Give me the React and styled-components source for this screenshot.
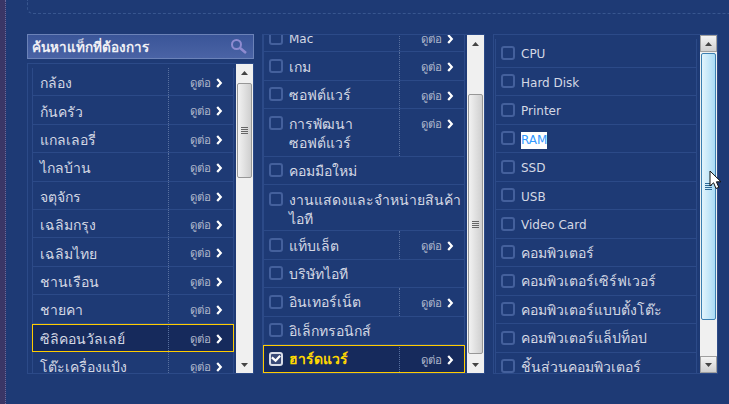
import React from "react";
import styled, { createGlobalStyle } from "styled-components";

const tags = [
  { name: "กล้อง" },
  { name: "ก้นครัว" },
  { name: "แกลเลอรี่" },
  { name: "ไกลบ้าน" },
  { name: "จตุจักร" },
  { name: "เฉลิมกรุง" },
  { name: "เฉลิมไทย" },
  { name: "ชานเรือน" },
  { name: "ชายคา" },
  { name: "ซิลิคอนวัลเลย์", active: true },
  { name: "โต๊ะเครื่องแป้ง" },
];

const categories = [
  { name: "Mac", more: true, h: 28.4 },
  { name: "เกม", more: true, h: 28.4 },
  { name: "ซอฟต์แวร์", more: true, h: 28.4 },
  { name: "การพัฒนา\nซอฟต์แวร์", more: true, h: 47.4, tall: true },
  { name: "คอมมือใหม่", h: 28.4 },
  { name: "งานแสดงและจำหน่ายสินค้า\nไอที", h: 46.4, tall: true },
  { name: "แท็บเล็ต", more: true, h: 28.4 },
  { name: "บริษัทไอที", h: 28.4 },
  { name: "อินเทอร์เน็ต", more: true, h: 28.4 },
  { name: "อิเล็กทรอนิกส์", h: 28.4 },
  { name: "ฮาร์ดแวร์", more: true, h: 28.4, active: true, checked: true },
];

const items = [
  "CPU",
  "Hard Disk",
  "Printer",
  "RAM",
  "SSD",
  "USB",
  "Video Card",
  "คอมพิวเตอร์",
  "คอมพิวเตอร์เซิร์ฟเวอร์",
  "คอมพิวเตอร์แบบตั้งโต๊ะ",
  "คอมพิวเตอร์แล็ปท็อป",
  "ชิ้นส่วนคอมพิวเตอร์",
];

const isThai = (text) => /[\u0E00-\u0E7F]/.test(text);

const Arrow = ({ down }) => (
  <svg width="7" height="4" viewBox="0 0 7 4">
    <path d={down ? "M0 0h7L3.5 4z" : "M3.5 0L7 4H0z"} fill="#444" />
  </svg>
);

const Chevron = () => (
  <svg width="7" height="10" viewBox="0 0 7 10">
    <path d="M1.2 1l3.6 4-3.6 4" fill="none" stroke="#fff" strokeWidth="2.2" />
  </svg>
);

const MoreCell = () => (
  <More>
    <MoreLink>
      ดูต่อ <Chevron />
    </MoreLink>
  </More>
);

const Scrollbar = ({ top, height, hover }) => (
  <Bar $hover={hover}>
    <BarButton $hover={hover}>
      <Arrow />
    </BarButton>
    <Track>
      <Thumb $top={top} $height={height} $hover={hover}>
        <Grip $hover={hover} />
        <Grip $hover={hover} />
        <Grip $hover={hover} />
        <Grip $hover={hover} />
      </Thumb>
    </Track>
    <BarButton $hover={hover}>
      <Arrow down />
    </BarButton>
  </Bar>
);

const App = () => {
  return (
    <>
      <GlobalStyle />
      <Page>
        <SideStrip />
        <Content>
          <DashedBox />
          <Columns>
            <Column $width="227px">
              <SearchBox>
                <SearchText>ค้นหาแท็กที่ต้องการ</SearchText>
                <svg width="17" height="17" viewBox="0 0 17 17">
                  <circle cx="6.5" cy="6.5" r="4.5" fill="none" stroke="#8e8bd0" strokeWidth="2" />
                  <path d="M10 10l6 5" stroke="#8e8bd0" strokeWidth="2.6" />
                </svg>
              </SearchBox>
              <ListBox $height="311px">
                <Rows $pad="4px 0 0 4px">
                  {tags.map((t) => (
                    <Row key={t.name} $h={28.4} $active={t.active}>
                      <Label $indent="2px" $drop="4px" $thai>
                        {t.name}
                      </Label>
                      <MoreCell />
                    </Row>
                  ))}
                </Rows>
                <Scrollbar top={2} height={95} />
              </ListBox>
            </Column>

            <Column $width="223px">
              <ListBox $height="340px">
                <Rows $pad="0" $shift="-11px">
                  {categories.map((c) => (
                    <Row key={c.name} $h={c.h} $active={c.active}>
                      <Box $checked={c.checked} $tall={c.tall}>
                        {c.checked && (
                          <svg width="12" height="10" viewBox="0 0 12 10">
                            <path d="M1 3l4.5 4L11 1" fill="none" stroke="#fff" strokeWidth="2.6" />
                          </svg>
                        )}
                      </Box>
                      <Label $checked={c.checked} $tall={c.tall} $thai={isThai(c.name)}>
                        {c.name}
                      </Label>
                      {c.more && <MoreCell />}
                    </Row>
                  ))}
                </Rows>
                <Scrollbar top={42} height={260} />
              </ListBox>
            </Column>

            <Column $width="225px">
              <ListBox $height="340px">
                <Rows $pad="4px 0 0 1px">
                  {items.map((name) => (
                    <Row key={name} $h={28.5}>
                      <Box />
                      <Label $thai={isThai(name)}>
                        {name === "RAM" ? <Selected>RAM</Selected> : name}
                      </Label>
                    </Row>
                  ))}
                </Rows>
                <Scrollbar top={1} height={267} hover />
              </ListBox>
            </Column>
          </Columns>
        </Content>
        <Cursor width="13" height="20" viewBox="0 0 13 20">
          <path d="M1 1v15l3.6-3.2 2.4 5.7 2.8-1.2-2.4-5.5H12z" fill="#fff" stroke="#111" strokeWidth="1" />
        </Cursor>
      </Page>
    </>
  );
};

const GlobalStyle = createGlobalStyle`
  body {
    margin: 0;
    padding: 0;
    background: #1e3a75;
  }
`;

const Page = styled.div`
  position: relative;
  display: flex;
  width: 729px;
  height: 404px;
  overflow: hidden;
  background: #1e3a75;
  font-family: "DejaVu Sans", "Noto Sans", sans-serif;
`;

const SideStrip = styled.div`
  width: 5px;
  flex-shrink: 0;
  background: #3a3666;
  border-right: 1px dotted #6a6a9a;
`;

const Content = styled.div`
  flex: 1;
  padding-left: 21px;
`;

const DashedBox = styled.div`
  height: 13px;
  border: 1px dashed #38568f;
  border-top: 0;
  border-right: 0;
  border-bottom-left-radius: 6px;
`;

const Columns = styled.div`
  display: flex;
  gap: 8px;
  margin-top: 20px;
`;

const Column = styled.div`
  display: flex;
  flex-direction: column;
  width: ${(p) => p.$width};
  gap: 4px;
`;

const SearchBox = styled.div`
  display: flex;
  align-items: center;
  justify-content: space-between;
  height: 25px;
  box-sizing: border-box;
  padding: 0 6px 0 4px;
  background: linear-gradient(#3a5598, #4a63a5);
  border: 1px solid #6b82b8;
`;

const SearchText = styled.span`
  color: #f0f0f5;
  font-size: 13.5px;
  font-weight: bold;
`;

const ListBox = styled.div`
  display: flex;
  justify-content: space-between;
  height: ${(p) => p.$height};
  overflow: hidden;
  border: 1px solid #2c4a88;
  box-sizing: border-box;
`;

const Rows = styled.div`
  flex: 1;
  min-width: 0;
  overflow: hidden;
  padding: ${(p) => p.$pad};
  & > :first-child {
    margin-top: ${(p) => p.$shift || 0};
  }
`;

const Row = styled.div`
  display: flex;
  align-items: center;
  position: relative;
  box-sizing: border-box;
  width: 202px;
  height: ${(p) => p.$h}px;
  padding-left: 5px;
  border: 1px solid #2c4a88;
  border-top: 0;
  background: ${(p) => (p.$active ? "#162a5c" : "transparent")};
  outline: ${(p) => (p.$active ? "1px solid #ffcc00" : "none")};
  outline-offset: -1px;
  z-index: ${(p) => (p.$active ? 1 : 0)};
`;

const Box = styled.span`
  display: flex;
  align-items: center;
  justify-content: center;
  flex-shrink: 0;
  align-self: ${(p) => (p.$tall ? "flex-start" : "center")};
  box-sizing: border-box;
  width: 14px;
  height: 14px;
  margin-top: ${(p) => (p.$tall ? "7px" : "0")};
  margin-right: 6px;
  border: 2px solid ${(p) => (p.$checked ? "#d8dce8" : "#44609c")};
  border-radius: 3px;
  background: ${(p) => (p.$checked ? "#3a4a78" : "transparent")};
`;

const Label = styled.span`
  flex: 1;
  min-width: 0;
  align-self: ${(p) => (p.$tall ? "flex-start" : "center")};
  margin-top: ${(p) => (p.$tall ? "4px" : "0")};
  padding-top: ${(p) => p.$drop || (p.$thai ? "2px" : "4px")};
  padding-left: ${(p) => p.$indent || 0};
  color: ${(p) => (p.$checked ? "#ffd800" : "#d4d8e4")};
  font-size: ${(p) => (p.$thai ? "14px" : "12px")};
  font-weight: ${(p) => (p.$checked ? "bold" : "normal")};
  line-height: 19px;
  white-space: pre-line;
`;

const Selected = styled.span`
  display: inline-block;
  line-height: 17px;
  background: #fff;
  color: #3399ff;
`;

const More = styled.span`
  flex-shrink: 0;
  align-self: stretch;
  box-sizing: border-box;
  width: 65px;
  border-left: 1px dotted #58709f;
`;

const MoreLink = styled.span`
  display: flex;
  align-items: center;
  justify-content: flex-end;
  gap: 5px;
  box-sizing: border-box;
  height: 28px;
  padding-top: 2px;
  padding-right: 10px;
  color: #b0b8cc;
  font-size: 11.5px;
`;

const Bar = styled.div`
  display: flex;
  flex-direction: column;
  flex-shrink: 0;
  width: 17px;
  background: #f0f0f0;
  box-sizing: border-box;
`;

const BarButton = styled.div`
  display: flex;
  align-items: center;
  justify-content: center;
  flex-shrink: 0;
  height: 17px;
  box-sizing: border-box;
  ${(p) => (p.$hover ? "border: 1px solid #a0a0a0; background: linear-gradient(#f4f4f4, #d0d0d0);" : "")}
`;

const Track = styled.div`
  flex: 1;
  min-height: 0;
`;

const Thumb = styled.div`
  display: flex;
  flex-direction: column;
  align-items: center;
  justify-content: center;
  gap: 1px;
  box-sizing: border-box;
  margin-top: ${(p) => p.$top}px;
  margin-left: 1px;
  width: 15px;
  height: ${(p) => p.$height}px;
  border: 1px solid ${(p) => (p.$hover ? "#3c7fb1" : "#979797")};
  border-radius: 2px;
  background: ${(p) =>
    p.$hover
      ? "linear-gradient(90deg, #e3f4fc, #a9dbf6)"
      : "linear-gradient(90deg, #f2f2f2, #cfcfcf)"};
`;

const Grip = styled.span`
  width: 7px;
  height: 1px;
  background: ${(p) => (p.$hover ? "#2d6a97" : "#666")};
`;

const Cursor = styled.svg`
  position: absolute;
  left: 709px;
  top: 170px;
`;

export default App;
